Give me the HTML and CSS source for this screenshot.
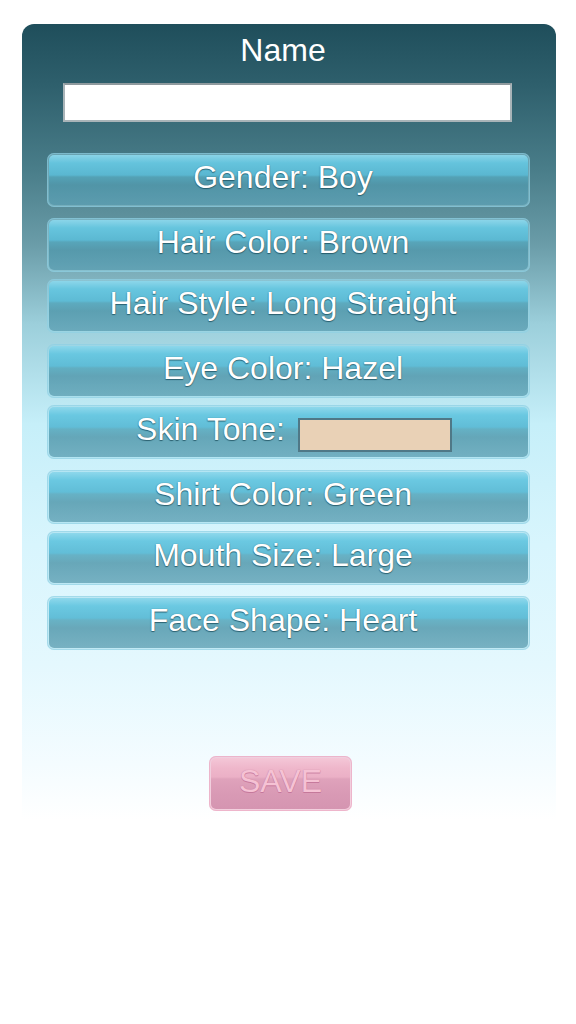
FILE: index.html
```html
<!DOCTYPE html>
<html>
<head>
<meta charset="utf-8">
<link rel="stylesheet" href="styles.css">
</head>
<body>
<div class="card">
  <div class="title">Name</div>
  <input class="name-input" type="text">
  <div class="options">
    <div class="opt"><div class="face">Gender: Boy</div></div>
    <div class="opt"><div class="face">Hair Color: Brown</div></div>
    <div class="opt"><div class="face">Hair Style: Long Straight</div></div>
    <div class="opt"><div class="face">Eye Color: Hazel</div></div>
    <div class="opt"><div class="face face-skin">Skin Tone:<span class="swatch"></span></div></div>
    <div class="opt"><div class="face">Shirt Color: Green</div></div>
    <div class="opt"><div class="face">Mouth Size: Large</div></div>
    <div class="opt"><div class="face">Face Shape: Heart</div></div>
  </div>
  <div class="save"><div class="save-face">SAVE</div></div>
</div>
</body>
</html>
```
FILE: styles.css
```css
html, body {
  margin: 0;
  padding: 0;
  background: #ffffff;
}
body {
  font-family: "Liberation Sans", Arial, sans-serif;
  width: 576px;
  height: 1024px;
  overflow: hidden;
}
.card {
  margin: 24px 0 0 22px;
  width: 534px;
  height: 796px;
  box-sizing: border-box;
  border-radius: 12px 12px 0 0;
  padding-top: 8px;
  background: linear-gradient(180deg,
    #1f4e5b 0px,
    #2e5f6c 60px,
    #4b7f8b 150px,
    #6a9ca8 220px,
    #9ccfdb 300px,
    #c6eff9 400px,
    #d8f5fd 520px,
    #e4f8fe 640px,
    #f4fcff 740px,
    #ffffff 796px);
}
.title {
  text-align: center;
  color: #ffffff;
  font-size: 32px;
  line-height: 36px;
  padding-right: 12px;
}
.name-input {
  display: block;
  margin: 15px 0 0 41px;
  width: 449px;
  height: 39px;
  box-sizing: border-box;
  border: 2px solid #a9b4b8;
  border-top-color: #8f9a9e;
  background: #ffffff;
  padding: 0 6px;
  font-size: 20px;
  outline: none;
}
.options {
  margin: 31px 0 0 25px;
  width: 483px;
  display: flex;
  flex-direction: column;
}
.opt {
  height: 54px;
  box-sizing: border-box;
  border-radius: 7px;
  padding: 2px;
  background: rgba(150, 215, 232, 0.45);
  box-shadow: inset 0 0 0 1px rgba(140, 205, 225, 0.55);
}
.opt:nth-child(odd) { margin-bottom: 11px; }
.opt:nth-child(even) { margin-bottom: 7px; }
.opt:last-child { margin-bottom: 0; }
.face {
  height: 100%;
  box-sizing: border-box;
  border-radius: 5px;
  padding-top: 4px;
  padding-right: 11px;
  text-align: center;
  color: #ffffff;
  font-size: 32px;
  line-height: 36px;
  white-space: nowrap;
  text-shadow: 0 1px 1px rgba(25, 75, 90, 0.75), 0 0 1px rgba(25, 75, 90, 0.7);
  background: linear-gradient(180deg,
    rgba(140, 215, 235, 0.95) 0px,
    rgba(100, 198, 224, 0.92) 8px,
    rgba(88, 185, 212, 0.9) 20px,
    rgba(75, 160, 182, 0.75) 22px,
    rgba(68, 140, 160, 0.7) 30px,
    rgba(78, 146, 166, 0.64) 50px);
}
.face-skin {
  padding-right: 0;
  padding-left: 11px;
}
.swatch {
  display: inline-block;
  width: 154px;
  height: 34px;
  box-sizing: border-box;
  margin-left: 13px;
  vertical-align: -12px;
  border: 2px solid #4f7887;
  background: #e9d1b6;
}
.save {
  margin: 106px 0 0 187px;
  width: 143px;
  height: 55px;
  box-sizing: border-box;
  border-radius: 7px;
  padding: 2px;
  background: rgba(236, 176, 200, 0.6);
  box-shadow: inset 0 0 0 1px rgba(235, 170, 195, 0.7);
}
.save-face {
  height: 100%;
  box-sizing: border-box;
  border-radius: 5px;
  padding-top: 5px;
  text-align: center;
  color: #f5c2d4;
  font-size: 32px;
  line-height: 36px;
  text-shadow: 0 0 1px #bf6f93, 0 1px 0 rgba(185, 100, 140, 0.6);
  background: linear-gradient(180deg,
    #f4c7d7 0px,
    #efb7cb 10px,
    #ebb0c6 19px,
    #dfa2bb 21px,
    #d99ab5 35px,
    #d595b1 51px);
}
```
